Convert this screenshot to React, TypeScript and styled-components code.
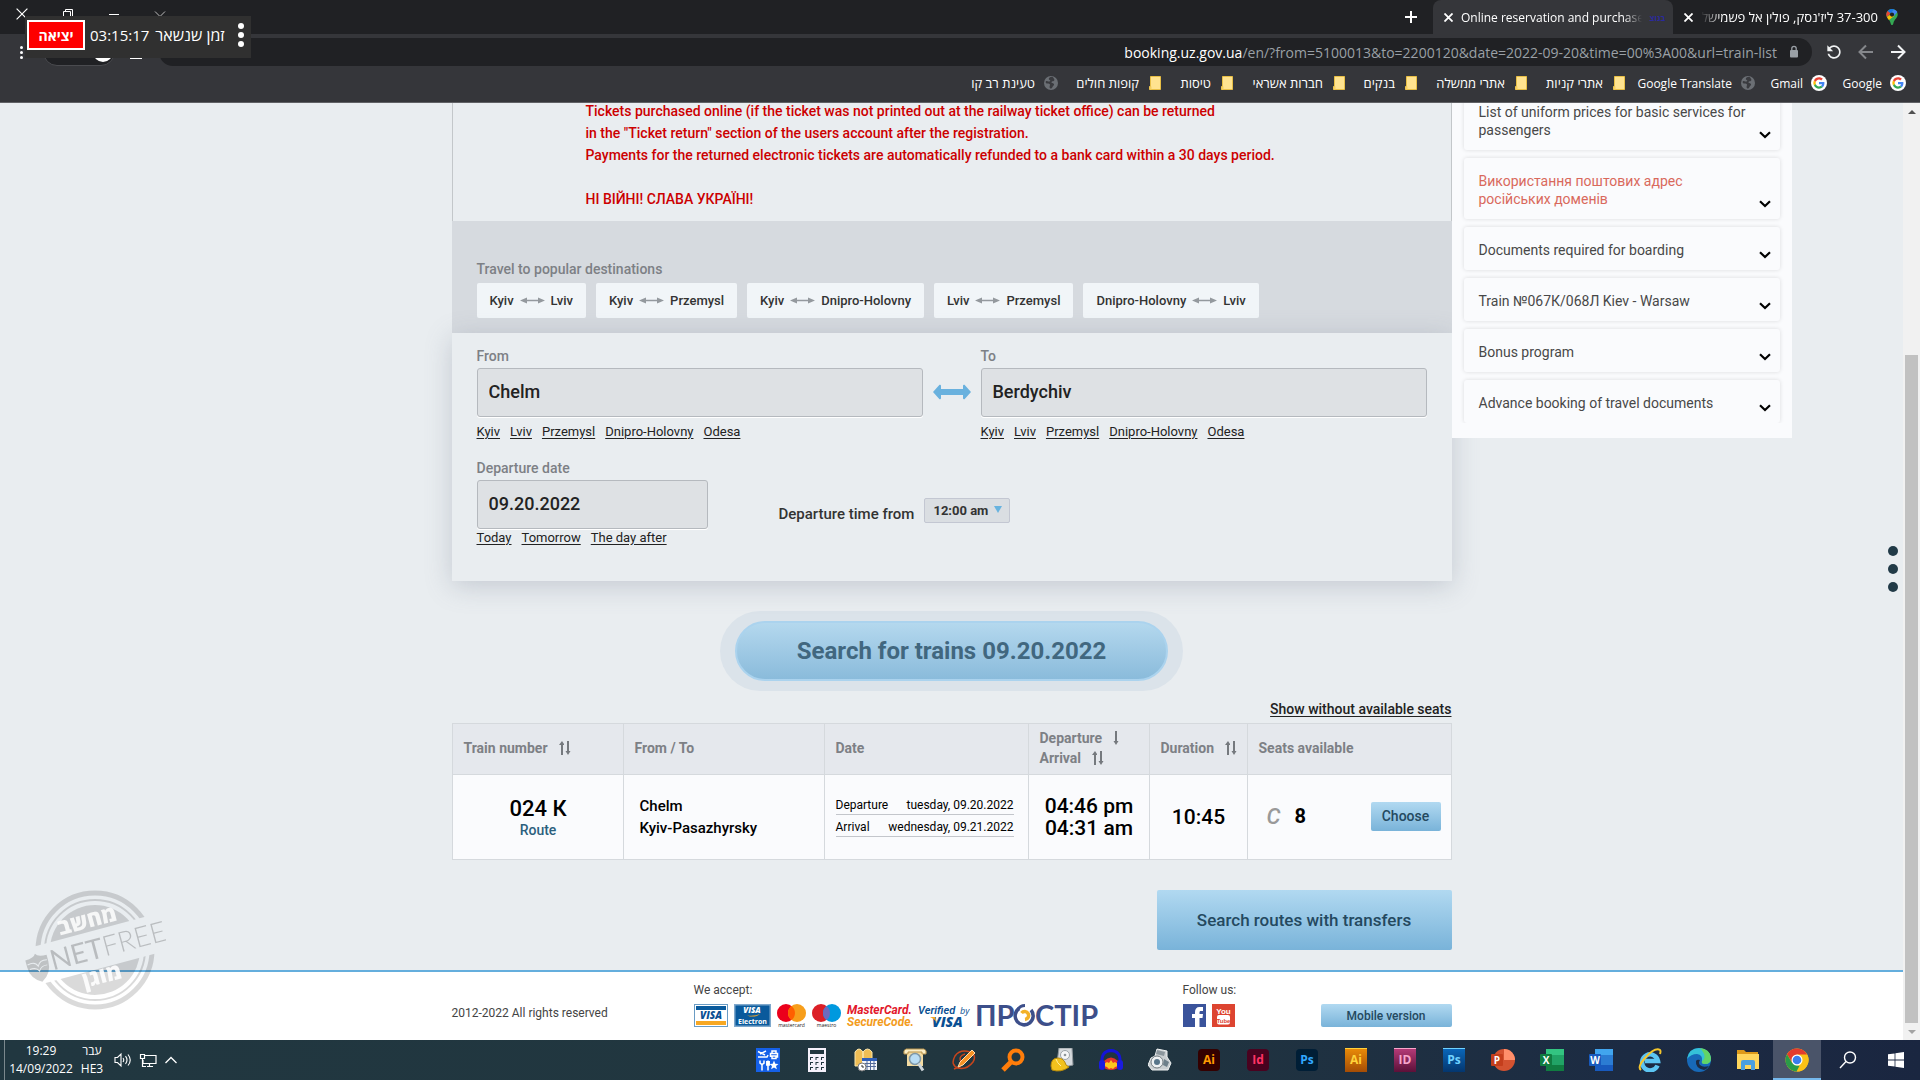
import React from "react";
import styled, { createGlobalStyle } from "styled-components";

const UI = `"Open Sans", "Noto Sans", "Liberation Sans", "DejaVu Sans", sans-serif`;
const BODY = `Roboto, "Liberation Sans", sans-serif`;

const Global = createGlobalStyle`
  *, *::before, *::after { box-sizing: border-box; }
  body { margin: 0; font-family: ${BODY}; overflow: hidden; }
  button, input, select { font-family: inherit; margin: 0; }
  button { cursor: pointer; border: 0; background: none; padding: 0; color: inherit; }
  svg { display: block; flex: none; }
`;

/* ---------- shell ---------- */
const Shell = styled.div`
  height: 100vh;
  display: flex;
  flex-direction: column;
  background: #e9edf0;
`;

const BrowserTop = styled.header`
  flex: none;
  background: #35363a;
  color: #fff;
  font-family: ${UI};
  border-bottom: 1px solid #606165;
`;

const TabStrip = styled.div`
  height: 34px;
  display: flex;
  align-items: stretch;
  background: #202124;
`;

const WindowControls = styled.div`
  display: flex;
  align-items: center;
  padding: 0 0 6px 16px;
  gap: 34px;
`;

const PlainButton = styled.button`
  display: flex;
  align-items: center;
  justify-content: center;
`;

const NewTab = styled(PlainButton)`
  margin-left: auto;
  width: 44px;
`;

const Tab = styled.div<{ $active?: boolean; $width: number }>`
  width: ${(p) => p.$width}px;
  display: flex;
  align-items: center;
  gap: 8px;
  padding: 0 ${(p) => (p.$active ? 8 : 22)}px 0 11px;
  font-size: ${(p) => (p.$active ? 12 : 13)}px;
  border-radius: 8px 8px 0 0;
  background: ${(p) => (p.$active ? "#35363a" : "transparent")};
`;

const TabTitle = styled.span<{ $rtl?: boolean }>`
  flex: 1;
  min-width: 0;
  overflow: hidden;
  white-space: nowrap;
  direction: ${(p) => (p.$rtl ? "rtl" : "ltr")};
  mask-image: ${(p) =>
    p.$rtl
      ? "linear-gradient(to left, #000 88%, transparent)"
      : "linear-gradient(to right, #000 90%, transparent)"};
`;

const TinyMark = styled.span`
  color: #2b2a9c;
  font-size: 8px;
  font-weight: 700;
`;

const Toolbar = styled.div`
  display: flex;
  align-items: center;
  padding: 4px 12px 0 20px;
  height: 32px;
`;

const ProfilePill = styled.div`
  width: 72px;
  height: 28px;
  margin: 0 15px 0 20px;
  padding-right: 1px;
  border: 1px solid #4a4b4f;
  border-radius: 14px;
  background: #202124;
  display: flex;
  align-items: center;
  justify-content: flex-end;
`;

const Avatar = styled.span`
  width: 20px;
  height: 20px;
  border-radius: 50%;
  background: #fff;
`;

const MediaBars = styled.span`
  width: 12px;
  height: 14px;
  margin-right: 17px;
  border-bottom: 2px solid #fff;
`;

const Omnibox = styled.div`
  flex: 1;
  height: 28px;
  border-radius: 14px;
  background: #202124;
  display: flex;
  align-items: center;
  justify-content: flex-end;
  gap: 11px;
  padding-right: 12px;
  font-size: 14px;
  color: #9aa0a6;
`;

const Host = styled.span`
  color: #fff;
`;

const NavButtons = styled.nav`
  display: flex;
  gap: 12px;
  margin-left: 12px;
`;

const Bookmarks = styled.nav`
  direction: rtl;
  height: 36px;
  display: flex;
  align-items: center;
  gap: 16px;
  padding: 0 14px 2px;
`;

const Bookmark = styled.a<{ $hebrew: boolean }>`
  display: flex;
  align-items: center;
  gap: 8px;
  color: #fff;
  text-decoration: none;
  font-size: ${(p) => (p.$hebrew ? 13 : 12)}px;
  white-space: nowrap;
`;

const BookmarkText = styled.span<{ $width: number }>`
  width: ${(p) => p.$width}px;
  display: flex;
  justify-content: flex-start;
`;

/* ---------- timer widget floating above the window ---------- */
const TimerWidget = styled.div`
  position: absolute;
  top: 16px;
  left: 25px;
  width: 226px;
  height: 42px;
  display: flex;
  align-items: center;
  padding: 0 7px 4px 2px;
  background: #303030;
  color: #fff;
  font-family: ${UI};
  font-size: 15px;
  z-index: 5;
`;

const ExitButton = styled.button`
  width: 58px;
  height: 30px;
  margin-right: 5px;
  border: 2px solid #fff;
  background: #fe0000;
  color: #fff;
  font-size: 14px;
  font-weight: 700;
`;

const TimerLabel = styled.span`
  margin: 0 auto 0 6px;
  font-size: 16px;
  white-space: nowrap;
`;

/* ---------- page ---------- */
const Viewport = styled.div`
  flex: 1;
  min-height: 0;
  display: flex;
`;

const Page = styled.div`
  flex: 1;
  min-width: 0;
  display: flex;
  flex-direction: column;
  overflow: hidden;
`;

const Columns = styled.div`
  display: grid;
  grid-template-columns: minmax(0, 1fr) minmax(0, 1000px) minmax(0, 1fr);
  align-items: start;
`;

/* The document is scrolled: its first rows start above the viewport. */
const Scrolled = styled(Columns)`
  margin-top: -14px;
`;

const Main = styled.main`
  grid-column: 2;
`;

const Notice = styled.section`
  padding: 11px 132px 11px 133px;
  border: solid #c3c7ca;
  border-width: 0 1px;
  color: #cc0000;
  font-size: 14px;
  font-weight: 500;
  line-height: 22px;
  p { margin: 0 0 22px; }
  p:last-child { margin: 0; }
`;

const Popular = styled.section`
  padding: 39px 25px 15px;
  background: #d6dadf;
`;

const Caption = styled.h2`
  margin: 0 0 5px;
  font-size: 14px;
  font-weight: 500;
  line-height: 18px;
  color: #7d8085;
`;

const Row = styled.div<{ $gap: number }>`
  display: flex;
  gap: ${(p) => p.$gap}px;
`;

const RouteButton = styled.button`
  height: 35px;
  padding: 0 13px;
  display: flex;
  align-items: center;
  gap: 6px;
  border-radius: 2px;
  background: #f1f5f8;
  color: #333;
  font-size: 13px;
  font-weight: 500;
`;

const SearchForm = styled.form`
  position: relative;
  padding: 14px 25px 34px;
  background: #e9edf0;
  box-shadow: 0 5px 25px rgba(110, 120, 140, 0.3);
`;

const Stations = styled.div`
  display: grid;
  grid-template-columns: 1fr 58px 1fr;
`;

const Label = styled.label`
  display: block;
  margin-bottom: 3px;
  font-size: 14px;
  font-weight: 500;
  line-height: 18px;
  color: #7d8085;
`;

const TextBox = styled.input`
  display: block;
  width: 100%;
  height: 49px;
  padding: 0 11px 2px;
  border: 1px solid #b5b9be;
  border-radius: 3px;
  background: #dee1e4;
  box-shadow: 0 1px 0 #fff;
  color: #222;
  font-size: 18px;
  font-weight: 500;
`;

const Swap = styled(PlainButton)`
  height: 48px;
  margin-top: 21px;
`;

const Hints = styled.div<{ $top?: number }>`
  display: flex;
  gap: 10px;
  margin-top: ${(p) => p.$top ?? 0}px;
  line-height: 18px;
  font-size: 13px;
  a { color: #222; text-underline-offset: 2px; }
`;

const DateRow = styled.div`
  display: flex;
  align-items: flex-start;
  margin-top: 18px;
`;

const DateField = styled.div`
  width: 231px;
  margin-right: 71px;
`;

const TimeField = styled.div`
  display: flex;
  align-items: flex-start;
  gap: 10px;
  margin-top: 39px;
  color: #333;
  font-size: 15px;
  font-weight: 500;
  line-height: 32px;
`;

const SelectBox = styled.div`
  position: relative;
  height: 25px;
  &::after {
    content: "";
    position: absolute;
    right: 8px;
    top: 8px;
    border: solid transparent;
    border-width: 7px 4px 0;
    border-top-color: #68b3df;
    pointer-events: none;
  }
`;

const TimeSelect = styled.select`
  appearance: none;
  display: block;
  width: 86px;
  height: 25px;
  padding: 0 0 0 8px;
  border: 1px solid #c3c7d2;
  border-radius: 2px;
  background: #dadee2;
  color: #333;
  font-size: 13px;
  font-weight: 700;
`;

const SearchHalo = styled.div`
  width: 463px;
  margin: 30px auto 9px;
  padding: 10px 15px;
  border-radius: 40px;
  background: #dbe3ea;
`;

const SearchButton = styled.button`
  width: 100%;
  height: 60px;
  border: 2px solid #abd3ee;
  border-radius: 30px;
  background: linear-gradient(#b4d8ee, #8abbdb);
  color: #41677f;
  font-size: 24px;
  font-weight: 700;
`;

const SeatsToggle = styled.div`
  display: flex;
  justify-content: flex-end;
  margin-bottom: 5px;
  font-size: 14px;
  font-weight: 500;
  line-height: 18px;
  a { color: #222; text-underline-offset: 2px; }
`;

const Trains = styled.table`
  width: 100%;
  table-layout: fixed;
  border-collapse: collapse;
  th, td { border: 1px solid #d5d9dd; }
  th {
    height: 51px;
    padding: 0 10px 2px 11px;
    background: #e5e8ed;
    color: #7d8085;
    font-size: 14px;
    font-weight: 700;
    line-height: 20px;
    text-align: left;
  }
  td {
    height: 85px;
    padding: 0 10px 0 11px;
    background: #fafbfd;
    color: #000;
  }
`;

const HeadLine = styled.div<{ $gap?: number }>`
  display: flex;
  align-items: center;
  gap: ${(p) => p.$gap ?? 11}px;
  white-space: nowrap;
`;

const TrainCell = styled.div`
  padding-top: 3px;
  text-align: center;
  line-height: 20px;
`;

const Big = styled.div<{ $size?: number }>`
  font-size: ${(p) => p.$size ?? 21}px;
  font-weight: 500;
  line-height: 22px;
  text-align: center;
  white-space: nowrap;
`;

const RouteLink = styled.a`
  color: #2c5f7d;
  font-size: 14px;
  font-weight: 500;
  text-decoration: none;
`;

const StationNames = styled.div`
  padding-left: 5px;
  font-size: 15px;
  font-weight: 500;
  line-height: 22px;
`;

const DateLine = styled.div`
  display: flex;
  justify-content: space-between;
  margin: 1px 4px 3px 0;
  border-bottom: 1px solid #c3c6cb;
  font-size: 12px;
  line-height: 18px;
  white-space: nowrap;
`;

const SeatCell = styled.div`
  display: flex;
  align-items: center;
  padding: 0 0 2px 8px;
`;

const SeatClass = styled.span`
  width: 28px;
  color: #999;
  font-size: 22px;
  font-style: italic;
  font-weight: 500;
`;

const SeatCount = styled.span`
  font-size: 20px;
  font-weight: 700;
`;

const BlueButton = styled.button<{ $w: number; $h: number; $size: number }>`
  width: ${(p) => p.$w}px;
  height: ${(p) => p.$h}px;
  border-radius: 2px;
  background: linear-gradient(#b1d9f1, #79b3d9);
  color: #24495f;
  font-size: ${(p) => p.$size}px;
  font-weight: 500;
  margin-left: auto;
  display: block;
`;

const Transfers = styled.div`
  margin-top: 30px;
`;

/* ---------- sidebar ---------- */
const Sidebar = styled.aside`
  grid-column: 3;
  position: relative;
  width: 340px;
  padding-bottom: 15px;
  background: #fafbfd;
`;

const Cards = styled.div`
  display: flex;
  flex-direction: column;
  gap: 8px;
  padding: 0 12px;
  overflow: hidden;
`;

const Card = styled.button<{ $alert?: boolean }>`
  display: flex;
  align-items: flex-end;
  padding: 14px 9px 11px 15px;
  border-radius: 3px;
  background: #fafbfd;
  box-shadow: 0 0 4px rgba(0, 0, 0, 0.13);
  color: ${(p) => (p.$alert ? "#d9695c" : "#484848")};
  font-size: 14px;
  line-height: 18px;
  text-align: left;
  span { flex: 1; padding-right: 6px; }
`;

/* ---------- footer ---------- */
const Footer = styled.footer`
  margin-top: auto;
  border-top: 2px solid #64aedd;
  background: #fff;
  color: #444;
  font-size: 12px;
`;

const FooterRow = styled.div`
  grid-column: 2;
  height: 68px;
  display: grid;
  grid-template-columns: 242px 489px 138px 131px;
`;

const FooterCol = styled.div<{ $top: number }>`
  padding-top: ${(p) => p.$top}px;
  line-height: 16px;
`;

const Logos = styled.div`
  display: flex;
  gap: 6px;
  height: 23px;
  margin-top: 6px;
  svg { overflow: visible; }
`;

/* ---------- scrollbar ---------- */
const Scrollbar = styled.div`
  width: 17px;
  padding: 0 2px;
  background: #f1f1f1;
  display: flex;
  flex-direction: column;
  align-items: center;
`;

const ScrollEnd = styled.div`
  height: 17px;
  display: flex;
  align-items: center;
`;

const Track = styled.div`
  flex: 1;
  width: 100%;
  display: flex;
  flex-direction: column;
  justify-content: flex-end;
`;

const Thumb = styled.div`
  height: 74%;
  background: #c1c1c1;
`;

/* ---------- floating pieces ---------- */
const SideDots = styled.div`
  position: absolute;
  right: 22px;
  top: 546px;
  display: flex;
  flex-direction: column;
  gap: 8px;
  i { width: 10px; height: 10px; border-radius: 50%; background: #213a47; }
`;

const Stamp = styled.div`
  position: absolute;
  left: 20px;
  bottom: 67px;
  pointer-events: none;
`;

/* ---------- taskbar ---------- */
const Taskbar = styled.footer`
  flex: none;
  height: 40px;
  display: flex;
  align-items: center;
  background: linear-gradient(to right, #213740 0%, #21363f 55%, #1c2b43 85%, #1a2640 100%);
  color: #fff;
  font-family: ${UI};
  font-size: 12px;
  line-height: 18px;
  text-align: center;
`;

const Clock = styled.div`
  margin-left: 4px;
  height: 40px;
  width: 73px;
  padding-top: 2px;
  border-left: 1px solid #7b888d;
`;

const Lang = styled.div`
  width: 30px;
  height: 40px;
  padding-top: 2px;
`;

const Tray = styled.div`
  display: flex;
  align-items: center;
  gap: 7px;
  margin-left: 7px;
`;

const Apps = styled.div`
  margin-left: auto;
  display: flex;
  gap: 1px;
`;

const AppButton = styled.button<{ $active?: boolean }>`
  width: 48px;
  height: 40px;
  display: flex;
  align-items: center;
  justify-content: center;
  background: ${(p) => (p.$active ? "#4a5469" : "transparent")};
  box-shadow: ${(p) => (p.$active ? "inset 0 -2px 0 #76b9ed" : "none")};
`;

const StartArea = styled.div`
  display: flex;
  margin-left: 3px;
`;

const AdobeTile = styled.span<{ $bg: string; $fg: string; $old?: boolean }>`
  width: 22px;
  height: ${(p) => (p.$old ? 24 : 22)}px;
  border-radius: ${(p) => (p.$old ? 0 : 4)}px;
  border-top: ${(p) => (p.$old ? "1px solid " + p.$fg : "0")};
  background: ${(p) => p.$bg};
  color: ${(p) => p.$fg};
  font-size: 12px;
  font-weight: 700;
  line-height: 22px;
`;

/* ---------- drawings ---------- */
const Cross = ({ s = 9, w = 1 }: { s?: number; w?: number }) => (
  <svg width={s} height={s} viewBox="0 0 10 10" stroke="#fff" strokeWidth={w} fill="none">
    <path d="M.5.5l9 9M9.5.5l-9 9" />
  </svg>
);

const GoogleG = () => (
  <svg width="16" height="16" viewBox="-10 -10 68 68">
    <circle cx="24" cy="24" r="34" fill="#fff" />
    <path fill="#EA4335" d="M24 9.5c3.54 0 6.71 1.22 9.21 3.6l6.85-6.85C35.9 2.38 30.47 0 24 0 14.62 0 6.51 5.38 2.56 13.22l7.98 6.19C12.43 13.72 17.74 9.5 24 9.5z" />
    <path fill="#4285F4" d="M46.98 24.55c0-1.57-.15-3.09-.38-4.55H24v9.02h12.94c-.58 2.96-2.26 5.48-4.78 7.18l7.73 6c4.51-4.18 7.09-10.36 7.09-17.65z" />
    <path fill="#FBBC05" d="M10.53 28.59c-.48-1.45-.76-2.99-.76-4.59s.27-3.14.76-4.59l-7.98-6.19C.92 16.46 0 20.12 0 24c0 3.88.92 7.54 2.56 10.78l7.97-6.19z" />
    <path fill="#34A853" d="M24 48c6.48 0 11.93-2.13 15.89-5.81l-7.73-6c-2.15 1.45-4.92 2.3-8.16 2.3-6.26 0-11.57-4.22-13.47-9.91l-7.98 6.19C6.51 42.62 14.62 48 24 48z" />
  </svg>
);

const Globe = () => (
  <svg width="16" height="16" viewBox="0 0 16 16">
    <circle cx="8" cy="8" r="7" fill="#6b6f74" />
    <path d="M9 1.800c-1.500 0-3 .8-3.200 2-.2 1 .9 1 1.400 1.700.4.700-.7 1.200-1.700 1.100-1 0-1.200-.9-2.300-.5-.8.500-.7 2.300.4 2.500 1.300.2 2.400-.2 3.200.7.6.8-.2 1.500-.2 2.600 0 1 .6 1.600 1.400 1.500 1.300-.2 1.300-1.700 2.100-2.500.8-.7 1.300-1.400.6-2.200-.7-.7-2.200-.4-2.300-1.400 0-1.100 1.800-.8 2.600-1.500.7-.7.4-1.600-.2-2.300-.5-.8-1-1.700-1.800-1.700z" fill="#3a3b3f" />
  </svg>
);

const Folder = () => (
  <svg width="16" height="16" viewBox="0 0 16 16">
    <path d="M3.500 1.500h10v13h-11v-3h1z" fill="#ffe38f" stroke="#e8bf45" />
    <path d="M2.500 11.500h2v3h-2z" fill="#f6cf5e" />
  </svg>
);

const MapPin = () => (
  <svg width="12" height="16" viewBox="0 0 12 16">
    <path d="M6 0C2.700 0 .3 2.600.3 5.600c0 3.400 3.400 4.800 4.300 8.600.3 1.100.6 1.800 1.400 1.800s1.100-.7 1.400-1.800c.9-3.800 4.300-5.200 4.300-8.600C11.700 2.600 9.300 0 6 0z" fill="#34a853" />
    <path d="M6 0C4.200 0 2.700.8 1.600 2l3 2.500L8 .4C7.400.1 6.700 0 6 0z" fill="#1a73e8" />
    <path d="M1.600 2A5.600 5.600 0 0 0 .9 8l3.700-3.500z" fill="#ea4335" />
    <path d="M.9 8c.5 1.100 1.200 2 1.900 2.900L8 7.300 4.200 6z" fill="#fbbc04" />
    <path d="M8 .4 4.600 4.500 8 7l3.300-4C10.700 1.800 9.500.8 8 .4z" fill="#4285f4" />
    <circle cx="6" cy="5.600" r="2.100" fill="#202124" />
  </svg>
);

const NavArrow = ({ back }: { back?: boolean }) => (
  <svg width="20" height="20" viewBox="0 0 20 20" fill="none" stroke={back ? "#85878b" : "#f1f3f4"} strokeWidth="2">
    <path d={back ? "M17 10H4M10 3.500 3.500 10l6.500 6.500" : "M3 10h13M10 3.500 16.500 10 10 16.500"} />
  </svg>
);

const Reload = () => (
  <svg width="20" height="20" viewBox="0 0 24 24" fill="#f1f3f4">
    <path transform="matrix(-1 0 0 1 24 0)" d="M17.650 6.350C16.200 4.900 14.210 4 12 4c-4.420 0-7.990 3.580-7.990 8s3.570 8 7.990 8c3.730 0 6.840-2.550 7.730-6h-2.080c-.82 2.330-3.040 4-5.650 4-3.310 0-6-2.690-6-6s2.690-6 6-6c1.660 0 3.140.69 4.220 1.780L13 11h7V4l-2.350 2.350z" />
  </svg>
);

const Lock = () => (
  <svg width="12" height="14" viewBox="0 0 12 14">
    <rect x="2" y="5" width="8" height="7.500" rx="1" fill="#9aa0a6" />
    <path d="M3.800 5V3.500a2.200 2.200 0 0 1 4.400 0V5" fill="none" stroke="#9aa0a6" strokeWidth="1.300" />
  </svg>
);

const Dots = ({ r, gap, color = "#fff" }: { r: number; gap: number; color?: string }) => (
  <svg width={r * 2} height={r * 2 + gap * 2} fill={color}>
    <circle cx={r} cy={r} r={r} />
    <circle cx={r} cy={r + gap} r={r} />
    <circle cx={r} cy={r + gap * 2} r={r} />
  </svg>
);

const ThinArrow = () => (
  <svg width="25" height="7" viewBox="0 0 25 7" fill="#94999e">
    <path d="M0 3.500 7 .5v2.300h11V.5l7 3-7 3V4.200H7v2.300z" />
  </svg>
);

const SwapArrow = () => (
  <svg width="38" height="16" viewBox="0 0 38 16" fill="#69b1de">
    <path d="M0 8 6.500.8Q8 .3 8 2v3h22V2q0-1.700 1.500-1.200L38 8l-6.500 7.200Q30 15.700 30 14v-3H8v3q0 1.700-1.500 1.200z" />
  </svg>
);

const Chevron = () => (
  <svg width="12" height="8" viewBox="0 0 12 8" fill="none" stroke="#000" strokeWidth="2.200">
    <path d="M1 1.200 6 6l5-4.800" />
  </svg>
);

const Sort = ({ single }: { single?: boolean }) => (
  <svg width={single ? 6 : 12} height="14" viewBox={single ? "6 0 6 14" : "0 0 12 14"} fill="#75797e">
    {!single && <path d="M2 14V4H0L3 0l2 3v1H4v10z" />}
    <path d="M8 0v10H6.500L9 14l2.500-4H10V0z" />
  </svg>
);

const VisaCard = () => (
  <svg width="34" height="23" viewBox="0 0 34 23">
    <rect width="34" height="23" fill="#6a9cc4" />
    <rect x="1" y="1" width="32" height="21" fill="#fff" />
    <rect x="2" y="2" width="30" height="4" fill="#0a5a9c" />
    <rect x="2" y="17" width="30" height="4" fill="#f7a823" />
    <text x="17" y="15" textAnchor="middle" fontFamily="Open Sans" fontStyle="italic" fontWeight="800" fontSize="10" fill="#0a4f92">VISA</text>
  </svg>
);

const VisaElectron = () => (
  <svg width="37" height="23" viewBox="0 0 37 23">
    <rect width="37" height="23" fill="#7fa8cc" />
    <rect x="1.500" y="1.500" width="34" height="20" fill="#0a5a9c" />
    <text x="18" y="9" textAnchor="middle" fontFamily="Open Sans" fontStyle="italic" fontWeight="800" fontSize="8" fill="#fff">VISA</text>
    <path d="M13 11.500q8 1 13-1.500-3 3-10 2.500z" fill="#f7a823" />
    <text x="18.500" y="20" textAnchor="middle" fontFamily="Open Sans" fontWeight="700" fontSize="7" fill="#fff">Electron</text>
  </svg>
);

const TwoDiscs = ({ left, right, mid, name }: { left: string; right: string; mid: string; name: string }) => (
  <svg width="29" height="23" viewBox="0 0 29 23">
    <circle cx="9" cy="9" r="9" fill={left} />
    <circle cx="20" cy="9" r="9" fill={right} />
    <path d="M14.500 1.900a9 9 0 0 1 0 14.200 9 9 0 0 1 0-14.200z" fill={mid} />
    <text x="14.500" y="23" textAnchor="middle" fontFamily="Open Sans" fontSize="5" fill="#222">{name}</text>
  </svg>
);

const SecureCode = () => (
  <svg width="65" height="23" viewBox="0 0 65 23" fontFamily="Roboto" fontStyle="italic" fontWeight="700" fontSize="12">
    <text x="0" y="10" fill="#e2182b">MasterCard.</text>
    <text x="0" y="22" fill="#f39c1c">SecureCode.</text>
  </svg>
);

const VerifiedVisa = () => (
  <svg width="53" height="23" viewBox="0 0 53 23" fontFamily="Open Sans" fontStyle="italic" fontWeight="600" fill="#0a4f92">
    <text x="0" y="10" fontFamily="Roboto" fontSize="11">Verified</text>
    <text x="42" y="10" fontSize="9" fontWeight="400">by</text>
    <text x="14" y="23" fontSize="14" fontWeight="800">VISA</text>
    <path d="M12 13h5l2 6q-2-4-7-6z" fill="#f7a823" />
  </svg>
);

const Prostir = () => (
  <svg width="122" height="23" viewBox="0 0 122 23" fontFamily="Lato" fontWeight="700" fontSize="29" fill="#3d4f8a">
    <text x="-2" y="22">ПР</text>
    <g fill="none" strokeWidth="3.500">
      <path d="M42 4.500a9 9 0 1 0 12 1.500" stroke="#3d4f8a" />
      <path d="M41 5.500q2-4 7-4" stroke="#3d4f8a" strokeWidth="3" />
      <path d="M44.500 9a4 4 0 1 1 3.500 6.500" stroke="#f3b229" />
    </g>
    <text x="58" y="22">СТІР</text>
  </svg>
);

const Facebook = () => (
  <svg width="23" height="23" viewBox="0 0 23 23">
    <rect width="23" height="23" fill="#3a539b" />
    <path d="M12 23v-9H9v-4h3V8c0-3 1.500-5 4.500-5H20v4h-2c-1.200 0-1.500.5-1.500 1.500V10H20l-.5 4h-3v9z" fill="#fff" />
  </svg>
);

const YouTube = () => (
  <svg width="23" height="23" viewBox="0 0 23 23" fontFamily="Liberation Sans" fontWeight="700" textAnchor="middle">
    <rect width="23" height="23" fill="#dd4430" />
    <text x="11.500" y="10" fontSize="8" fill="#fff">You</text>
    <rect x="5" y="11" width="13" height="9.500" rx="2" fill="#fff" />
    <text x="11.500" y="18.500" fontSize="6" fill="#dd4430">Tube</text>
  </svg>
);

const NetFree = () => (
  <svg width="146" height="126" viewBox="-75 -63 146 126">
    <defs>
      <mask id="band">
        <rect x="-75" y="-63" width="150" height="126" fill="#fff" />
        <rect x="-80" y="-19" width="160" height="38" fill="#000" transform="rotate(-15)" />
      </mask>
    </defs>
    <g mask="url(#band)" opacity="0.14">
      <circle r="57" fill="none" stroke="#000" strokeWidth="5" />
      <circle r="50" fill="none" stroke="#000" strokeWidth="2" />
      <circle r="45" fill="#000" />
    </g>
    <g transform="rotate(-15)" fontFamily="Open Sans, Liberation Sans" textAnchor="middle">
      <text y="-23" fontSize="22" fontWeight="800" fill="#fff" opacity=".85">מחשב</text>
      <text y="34" fontSize="22" fontWeight="800" fill="#fff" opacity=".9">מוגן</text>
      <g fontFamily="Lato" fontSize="28" fill="#000" opacity=".2" textAnchor="start">
        <text x="-46" y="9">NET<tspan fontWeight="300">FREE</tspan></text>
      </g>
      <path d="M-70-8q9 0 11-4 2 4 11 4v7q0 12-11 18-11-6-11-18z" fill="#000" opacity=".18" />
      <path d="M-69-3q8-2 10 4 3-6 10-4M-68 2q7-1 9 4 3-5 9-4" fill="none" stroke="#e9edf0" />
    </g>
  </svg>
);

/* taskbar drawings */
const Speaker = () => (
  <svg width="18" height="16" viewBox="0 0 18 16" fill="none" stroke="#fff" strokeWidth="1.100">
    <path d="M1 5.500h2.500L7 2v12l-3.500-3.500H1zM9 6q1.500 2 0 4M11.500 4.200q3 3.800 0 7.600M14 2.500q4.500 5.500 0 11" />
  </svg>
);
const Network = () => (
  <svg width="18" height="16" viewBox="0 0 18 16" fill="none" stroke="#fff" strokeWidth="1.200">
    <path d="M6 3.500h11v8H4V8M8 14.500h6M10.500 11.500v3M1.500 2.500h4v4h-4zM3.500 6.500v8H7" />
  </svg>
);
const CaretUp = () => (
  <svg width="14" height="8" viewBox="0 0 14 8" fill="none" stroke="#fff" strokeWidth="1.300">
    <path d="M1.500 7 7 1.500 12.500 7" />
  </svg>
);
const Tools = () => (
  <svg width="24" height="24" viewBox="0 0 24 24">
    <rect width="24" height="24" fill="#1560e8" />
    <g fill="none" stroke="#fff" strokeWidth="1.500">
      <path d="M2 3.500 9 7M2 9h9l1-2M4 6l6-3" />
      <path d="M16 5V3h4v2M14.500 9V5.500h7V9h-2M16 8h4v2.500h-4z" />
      <path d="M6 17v5.500M12 12.500v10M10.800 13v4h2.400v-4" />
      <path d="M4 12.500v2.500l2 1.500L8 15v-2.500" />
    </g>
    <path d="M18 12.500l1.300 3.200 3.200.2-2.500 2.100.9 3.300-2.900-1.800-2.900 1.800.9-3.300-2.500-2.100 3.200-.2z" fill="#fff" />
  </svg>
);
const Calculator = () => (
  <svg width="18" height="24" viewBox="0 0 18 24">
    <rect width="18" height="24" fill="#f5f1fb" />
    <rect x="2" y="2" width="14" height="4" fill="#21363f" />
    <g fill="#21363f">
      {[9, 14, 19].map((y) => [2, 7.500, 13].map((x) => <path key={`${x}${y}`} d={`M${x} ${y}h3v1h-2v2h-1z`} />))}
    </g>
  </svg>
);
const Planner = () => (
  <svg width="24" height="24" viewBox="0 0 24 24">
    <path d="M1 4q2-3 4-3t4 3v14H1zM9 4q2-3 4.500-3T18 4v14H9z" fill="#eebd55" stroke="#fbe6ad" />
    <rect x="8" y="10" width="15" height="12" fill="#f4f6fa" />
    <rect x="8" y="10" width="15" height="3" fill="#2f5fb8" />
    <path d="M11 15.500h11M11 18.500h11M13 13v9M16.500 13v9M20 13v9" stroke="#536a9a" />
    <circle cx="8" cy="19" r="4" fill="#fff" stroke="#777" />
    <path d="M8 17v2h2" stroke="#333" fill="none" />
  </svg>
);
const ScrollFind = () => (
  <svg width="24" height="24" viewBox="0 0 24 24">
    <path d="M4 4h16v14H4z" fill="#f3dba2" />
    <path d="M3 1h18q3 1 2 5h-4V4H5v2H1Q0 2 3 1z" fill="#fbeec6" stroke="#b8924a" />
    <circle cx="12" cy="11" r="5.500" fill="#b9dcf4" stroke="#7f97a6" strokeWidth="1.500" />
    <path d="m15.500 15.500 4.500 7" stroke="#cdd5da" strokeWidth="3" />
  </svg>
);
const Sketch = () => (
  <svg width="24" height="24" viewBox="0 0 24 24" fill="none">
    <path d="M18 4Q8 1 3 8q-5 9 3 12 9 2 15-6 3-5 0-8M9 14q-3-6 4-8M2 21l7-3" stroke="#c8451c" strokeWidth="1.500" />
    <path d="m6 19 2-5L20 2l3 3-12 12z" fill="#f79326" stroke="#ffdfb0" />
  </svg>
);
const OrangeFind = () => (
  <svg width="24" height="24" viewBox="0 0 24 24" fill="none" stroke="#ff7d0a">
    <circle cx="15" cy="9" r="6.500" strokeWidth="4" />
    <path d="m10 14-8 8" strokeWidth="5" />
  </svg>
);
const DiskHat = () => (
  <svg width="24" height="24" viewBox="0 0 24 24">
    <path d="M9 0h13l1 17-9 2-7-4z" fill="#d5d9dc" stroke="#90979c" />
    <circle cx="15" cy="7" r="4.500" fill="#f5f6f7" stroke="#9ba2a7" />
    <circle cx="15" cy="7" r="1.300" fill="#8d9499" />
    <path d="M1 18q0-8 7-8 6 0 8 7l3 2q-8 6-17 3z" fill="#f2c21d" stroke="#b78a0a" />
    <path d="M6 11q1 4 5 7" stroke="#fff0a0" fill="none" />
  </svg>
);
const Headphones = () => (
  <svg width="24" height="24" viewBox="0 0 24 24">
    <path d="M5 13q7-7 14 0v7q-7 4-14 0z" fill="#e8322a" />
    <path d="M5 16l3-2 2 1 2-3 2 3 2-1 3 2v2l-3 1-2 2-2-1-2 1-2-2-3-1z" fill="#ffc61c" />
    <path d="M3 15Q2 3 12 2.500 22 3 21 15" fill="none" stroke="#1414d8" strokeWidth="3" />
    <rect x="0" y="12" width="6" height="10" rx="3" fill="#1b1be0" />
    <rect x="18" y="12" width="6" height="10" rx="3" fill="#1b1be0" />
  </svg>
);
const Camera = () => (
  <svg width="24" height="24" viewBox="0 0 24 24">
    <path d="M9 1l10 2v6l4 6-3 7H4l-4-5 3-7 4-2z" fill="#c9ced1" stroke="#eef1f2" />
    <path d="M9 2l8 2-1 4-8-2z" fill="#8b969d" />
    <circle cx="9" cy="14" r="6" fill="#eef1f3" stroke="#737c82" />
    <circle cx="9" cy="14" r="3" fill="#58758a" />
    <path d="M16 11l5 3-2 5-4-2z" fill="#6d7f8a" />
  </svg>
);
const Office = ({ letter, dark, main, light, round }: { letter: string; dark: string; main: string; light: string; round?: boolean }) => (
  <svg width="26" height="24" viewBox="0 0 26 24">
    {round ? (
      <>
        <circle cx="14" cy="12" r="11" fill={main} />
        <path d="M14 1a11 11 0 0 1 11 11H14z" fill={light} />
      </>
    ) : (
      <>
        <rect x="7" y="1" width="18" height="22" rx="1" fill={main} />
        <rect x="7" y="1" width="18" height="6" fill={light} />
        <rect x="7" y="17" width="18" height="6" fill={dark} />
      </>
    )}
    <rect x="1" y="6" width="12" height="12" rx="1" fill={dark} />
    <text x="7" y="16" textAnchor="middle" fontFamily="Open Sans" fontWeight="700" fontSize="10" fill="#fff">{letter}</text>
  </svg>
);
const Explorer = () => (
  <svg width="24" height="24" viewBox="0 0 24 24" fill="none">
    <path d="M19.500 17.500A8 8 0 1 1 20 13H7" stroke="#5cc5f2" strokeWidth="4.500" />
    <path d="M3 22q-4-3 4-12Q17-1 22 2q1 1 0 4" stroke="#f5c62c" strokeWidth="2" />
  </svg>
);
const Edge = () => (
  <svg width="24" height="24" viewBox="0 0 24 24">
    <circle cx="12" cy="12" r="12" fill="#1769b8" />
    <path d="M0 11Q2 0 12 0q11 1 12 10 0 6-6 6-4 0-3-3 1-6-5-7Q4 6 0 11z" fill="#35c1d8" />
    <path d="M13 0q10 1 11 10 0 6-6 6-4 0-3-3 6-4-2-13z" fill="#62d467" />
    <path d="M9 13q-1 7 8 9 3-1 5-4-6 2-9-1-2-2 0-5-3-1-4 1z" fill="#1c2b43" />
  </svg>
);
const Files = () => (
  <svg width="24" height="22" viewBox="0 0 24 22">
    <path d="M1 1h7l2 2h12v4H1z" fill="#dd9a1a" />
    <rect x="1" y="5" width="22" height="15" fill="#ffd65c" />
    <path d="M5 21v-8q0-2 2-2h10q2 0 2 2v8h-4v-5H9v5z" fill="#4b9fe0" />
  </svg>
);
const Chrome = () => (
  <svg width="24" height="24" viewBox="0 0 24 24">
    <circle cx="12" cy="12" r="11.500" fill="#fbc116" />
    <path d="M12 6.500h10.200A11.500 11.500 0 0 1 11.500 23.500L17 14z" fill="#fbc116" />
    <path d="M2 6.200A11.500 11.500 0 0 1 22 6.500H12L7.500 15z" fill="#e33b2e" />
    <path d="M2 6.200l5 8.600 4.500 2.700 3 .2-3 5.800A11.500 11.500 0 0 1 2 6.200z" fill="#2a9b48" />
    <circle cx="12" cy="12" r="5.500" fill="#fff" />
    <circle cx="12" cy="12" r="4.300" fill="#3b7ded" />
  </svg>
);
const Find = () => (
  <svg width="18" height="18" viewBox="0 0 18 18" fill="none" stroke="#fff" strokeWidth="1.400">
    <circle cx="11" cy="6.500" r="5.500" />
    <path d="M7 10.500 1 17" />
  </svg>
);
const Windows = () => (
  <svg width="16" height="16" viewBox="0 0 16 16" fill="#fff">
    <path d="M0 2.300 6.600 1.400v6.200H0zM7.400 1.300 16 0v7.600H7.400zM0 8.400h6.600v6.200L0 13.700zM7.400 8.400H16V16l-8.600-1.300z" />
  </svg>
);

/* ---------- data ---------- */
const bookmarks = [
  { text: "Google", icon: <GoogleG />, w: 39 },
  { text: "Gmail", icon: <GoogleG />, w: 31 },
  { text: "Google Translate", icon: <Globe />, w: 89 },
  { text: "אתרי קניות", icon: <Folder />, w: 58, hebrew: true },
  { text: "אתרי ממשלה", icon: <Folder />, w: 70, hebrew: true },
  { text: "בנקים", icon: <Folder />, w: 32, hebrew: true },
  { text: "חברות אשראי", icon: <Folder />, w: 72, hebrew: true },
  { text: "טיסות", icon: <Folder />, w: 32, hebrew: true },
  { text: "קופות חולים", icon: <Folder />, w: 64, hebrew: true },
  { text: "טעינת רב קו", icon: <Globe />, w: 64, hebrew: true },
];

const routes = [
  ["Kyiv", "Lviv"],
  ["Kyiv", "Przemysl"],
  ["Kyiv", "Dnipro-Holovny"],
  ["Lviv", "Przemysl"],
  ["Dnipro-Holovny", "Lviv"],
];

const cities = ["Kyiv", "Lviv", "Przemysl", "Dnipro-Holovny", "Odesa"];

const topics = [
  { text: "List of uniform prices for basic services for passengers" },
  { text: "Використання поштових адрес російських доменів", alert: true },
  { text: "Documents required for boarding" },
  { text: "Train №067К/068Л Kiev - Warsaw" },
  { text: "Bonus program" },
  { text: "Advance booking of travel documents" },
];

const apps: { name: string; icon: React.ReactNode; active?: boolean }[] = [
  { name: "Tools", icon: <Tools /> },
  { name: "Calculator", icon: <Calculator /> },
  { name: "Planner", icon: <Planner /> },
  { name: "Document search", icon: <ScrollFind /> },
  { name: "Sketch", icon: <Sketch /> },
  { name: "Everything", icon: <OrangeFind /> },
  { name: "Disk", icon: <DiskHat /> },
  { name: "Audio", icon: <Headphones /> },
  { name: "Camera", icon: <Camera /> },
  { name: "Illustrator", icon: <AdobeTile $bg="#330000" $fg="#ff9a00">Ai</AdobeTile> },
  { name: "InDesign", icon: <AdobeTile $bg="#49021f" $fg="#ff3366">Id</AdobeTile> },
  { name: "Photoshop", icon: <AdobeTile $bg="#001e36" $fg="#31a8ff">Ps</AdobeTile> },
  { name: "Illustrator CS", icon: <AdobeTile $old $bg="linear-gradient(#e88a08,#a44c05)" $fg="#ffd23a">Ai</AdobeTile> },
  { name: "InDesign CS", icon: <AdobeTile $old $bg="linear-gradient(#b33a77,#5c1038)" $fg="#f7a6cb">ID</AdobeTile> },
  { name: "Photoshop CS", icon: <AdobeTile $old $bg="linear-gradient(#0a66b8,#04366e)" $fg="#6fd2ff">Ps</AdobeTile> },
  { name: "PowerPoint", icon: <Office letter="P" dark="#c43e1c" main="#d35230" light="#ff8f6b" round /> },
  { name: "Excel", icon: <Office letter="X" dark="#107c41" main="#21a366" light="#33c481" /> },
  { name: "Word", icon: <Office letter="W" dark="#185abd" main="#2b7cd3" light="#41a5ee" /> },
  { name: "Internet Explorer", icon: <Explorer /> },
  { name: "Edge", icon: <Edge /> },
  { name: "Files", icon: <Files /> },
  { name: "Chrome", icon: <Chrome />, active: true },
];

const Station = ({ id, label, value }: { id: string; label: string; value: string }) => (
  <div>
    <Label htmlFor={id}>{label}</Label>
    <TextBox id={id} defaultValue={value} />
    <Hints $top={6}>
      {cities.map((c) => (
        <a href="#" key={c}>{c}</a>
      ))}
    </Hints>
  </div>
);

export default function App() {
  return (
    <Shell>
      <Global />
      <BrowserTop>
        <TabStrip>
          <WindowControls>
            <PlainButton aria-label="Close window"><Cross s={12} /></PlainButton>
            <PlainButton aria-label="Restore">
              <svg width="12" height="12" fill="none" stroke="#fff"><path d="M1.500 3.500h7v7h-7zM3.500 3V1.500h7v7H9" /></svg>
            </PlainButton>
            <PlainButton aria-label="Minimize">
              <svg width="12" height="12" stroke="#fff"><path d="M1 6.500h10" /></svg>
            </PlainButton>
            <PlainButton aria-label="Search tabs">
              <svg width="12" height="12" fill="none" stroke="#bbb"><path d="M1 3.500l5 5 5-5" /></svg>
            </PlainButton>
          </WindowControls>
          <NewTab aria-label="New tab">
            <svg width="12" height="12" stroke="#fff" strokeWidth="2"><path d="M6 0v12M0 6h12" /></svg>
          </NewTab>
          <Tab $active $width={240}>
            <PlainButton aria-label="Close tab"><Cross w={2} /></PlainButton>
            <TabTitle>Online reservation and purchase</TabTitle>
            <TinyMark>בנוצ</TinyMark>
          </Tab>
          <Tab $width={247}>
            <PlainButton aria-label="Close tab"><Cross w={2} /></PlainButton>
            <TabTitle $rtl>37-300 ליז'נסק, פולין אל פשמישל,</TabTitle>
            <MapPin />
          </Tab>
        </TabStrip>
        <Toolbar>
          <PlainButton aria-label="Menu"><Dots r={1.5} gap={5} /></PlainButton>
          <ProfilePill><Avatar /></ProfilePill>
          <MediaBars />
          <Omnibox>
            <span><Host>booking.uz.gov.ua</Host>/en/?from=5100013&amp;to=2200120&amp;date=2022-09-20&amp;time=00%3A00&amp;url=train-list</span>
            <Lock />
          </Omnibox>
          <NavButtons>
            <PlainButton aria-label="Reload"><Reload /></PlainButton>
            <PlainButton aria-label="Forward"><NavArrow back /></PlainButton>
            <PlainButton aria-label="Back"><NavArrow /></PlainButton>
          </NavButtons>
        </Toolbar>
        <Bookmarks>
          {bookmarks.map((b) => (
            <Bookmark href="#" key={b.text} $hebrew={!!b.hebrew}>
              {b.icon}
              <BookmarkText $width={b.w}>{b.text}</BookmarkText>
            </Bookmark>
          ))}
        </Bookmarks>
      </BrowserTop>

      <TimerWidget>
        <ExitButton>יציאה</ExitButton>
        <span>03:15:17</span>
        <TimerLabel>זמן שנשאר</TimerLabel>
        <Dots r={3} gap={9} />
      </TimerWidget>

      <Viewport>
        <Page>
          <Scrolled>
            <Main>
              <Notice>
                <p>
                  Tickets purchased online (if the ticket was not printed out at the railway ticket office) can be returned
                  <br />in the "Ticket return" section of the users account after the registration.
                  <br />Payments for the returned electronic tickets are automatically refunded to a bank card within a 30 days period.
                </p>
                <p>НІ ВІЙНІ! СЛАВА УКРАЇНІ!</p>
              </Notice>
              <Popular>
                <Caption>Travel to popular destinations</Caption>
                <Row $gap={10}>
                  {routes.map(([a, b]) => (
                    <RouteButton key={a + b}>{a}<ThinArrow />{b}</RouteButton>
                  ))}
                </Row>
              </Popular>
              <SearchForm onSubmit={(e) => e.preventDefault()}>
                <Stations>
                  <Station id="from" label="From" value="Chelm" />
                  <Swap type="button" aria-label="Swap stations"><SwapArrow /></Swap>
                  <Station id="to" label="To" value="Berdychiv" />
                </Stations>
                <DateRow>
                  <DateField>
                    <Label htmlFor="date">Departure date</Label>
                    <TextBox id="date" defaultValue="09.20.2022" />
                    <Hints>
                      <a href="#">Today</a>
                      <a href="#">Tomorrow</a>
                      <a href="#">The day after</a>
                    </Hints>
                  </DateField>
                  <TimeField>
                    <label htmlFor="time">Departure time from</label>
                    <SelectBox>
                      <TimeSelect id="time" defaultValue="12:00 am">
                        <option>12:00 am</option>
                      </TimeSelect>
                    </SelectBox>
                  </TimeField>
                </DateRow>
              </SearchForm>
              <SearchHalo>
                <SearchButton>Search for trains 09.20.2022</SearchButton>
              </SearchHalo>
              <SeatsToggle><a href="#">Show without available seats</a></SeatsToggle>
              <Trains>
                <colgroup>
                  <col style={{ width: 171 }} />
                  <col style={{ width: 201 }} />
                  <col style={{ width: 204 }} />
                  <col style={{ width: 121 }} />
                  <col style={{ width: 98 }} />
                  <col />
                </colgroup>
                <thead>
                  <tr>
                    <th><HeadLine>Train number <Sort /></HeadLine></th>
                    <th>From / To</th>
                    <th>Date</th>
                    <th>
                      <HeadLine>Departure <Sort single /></HeadLine>
                      <HeadLine>Arrival <Sort /></HeadLine>
                    </th>
                    <th><HeadLine>Duration <Sort /></HeadLine></th>
                    <th>Seats available</th>
                  </tr>
                </thead>
                <tbody>
                  <tr>
                    <td>
                      <TrainCell>
                        <Big $size={22}>024 К</Big>
                        <RouteLink href="#">Route</RouteLink>
                      </TrainCell>
                    </td>
                    <td><StationNames>Chelm<br />Kyiv-Pasazhyrsky</StationNames></td>
                    <td>
                      <DateLine><span>Departure</span><span>tuesday, 09.20.2022</span></DateLine>
                      <DateLine><span>Arrival</span><span>wednesday, 09.21.2022</span></DateLine>
                    </td>
                    <td><Big>04:46 pm<br />04:31 am</Big></td>
                    <td><Big>10:45</Big></td>
                    <td>
                      <SeatCell>
                        <SeatClass>С</SeatClass>
                        <SeatCount>8</SeatCount>
                        <BlueButton $w={70} $h={29} $size={14}>Choose</BlueButton>
                      </SeatCell>
                    </td>
                  </tr>
                </tbody>
              </Trains>
              <Transfers>
                <BlueButton $w={295} $h={60} $size={17}>Search routes with transfers</BlueButton>
              </Transfers>
            </Main>
            <Sidebar>
              <Cards>
                {topics.map((t) => (
                  <Card key={t.text} $alert={t.alert}>
                    <span>{t.text}</span>
                    <Chevron />
                  </Card>
                ))}
              </Cards>
            </Sidebar>
          </Scrolled>
          <Footer>
            <Columns>
              <FooterRow>
                <FooterCol $top={33}>2012-2022 All rights reserved</FooterCol>
                <FooterCol $top={10}>
                  We accept:
                  <Logos>
                    <VisaCard />
                    <VisaElectron />
                    <TwoDiscs left="#eb001b" right="#f79e1b" mid="#ff5f00" name="mastercard" />
                    <TwoDiscs left="#dc1f26" right="#0099df" mid="#6c6bbd" name="maestro" />
                    <SecureCode />
                    <VerifiedVisa />
                    <Prostir />
                  </Logos>
                </FooterCol>
                <FooterCol $top={10}>
                  Follow us:
                  <Logos>
                    <a href="#" aria-label="Facebook"><Facebook /></a>
                    <a href="#" aria-label="YouTube"><YouTube /></a>
                  </Logos>
                </FooterCol>
                <FooterCol $top={32}>
                  <BlueButton $w={131} $h={23} $size={12}>Mobile version</BlueButton>
                </FooterCol>
              </FooterRow>
            </Columns>
          </Footer>
        </Page>
        <Scrollbar>
          <ScrollEnd><svg width="8" height="4" fill="#505050"><path d="M4 0l4 4H0z" /></svg></ScrollEnd>
          <Track><Thumb /></Track>
          <ScrollEnd><svg width="8" height="4" fill="#a3a3a3"><path d="M4 4l4-4H0z" /></svg></ScrollEnd>
        </Scrollbar>
      </Viewport>

      <SideDots><i /><i /><i /></SideDots>
      <Stamp><NetFree /></Stamp>

      <Taskbar>
        <Clock>19:29<br />14/09/2022</Clock>
        <Lang>עבר<br />HE3</Lang>
        <Tray><Speaker /><Network /><CaretUp /></Tray>
        <Apps>
          {apps.map((a) => (
            <AppButton key={a.name} aria-label={a.name} $active={a.active}>{a.icon}</AppButton>
          ))}
        </Apps>
        <StartArea>
          <AppButton aria-label="Search"><Find /></AppButton>
          <AppButton aria-label="Start"><Windows /></AppButton>
        </StartArea>
      </Taskbar>
    </Shell>
  );
}
